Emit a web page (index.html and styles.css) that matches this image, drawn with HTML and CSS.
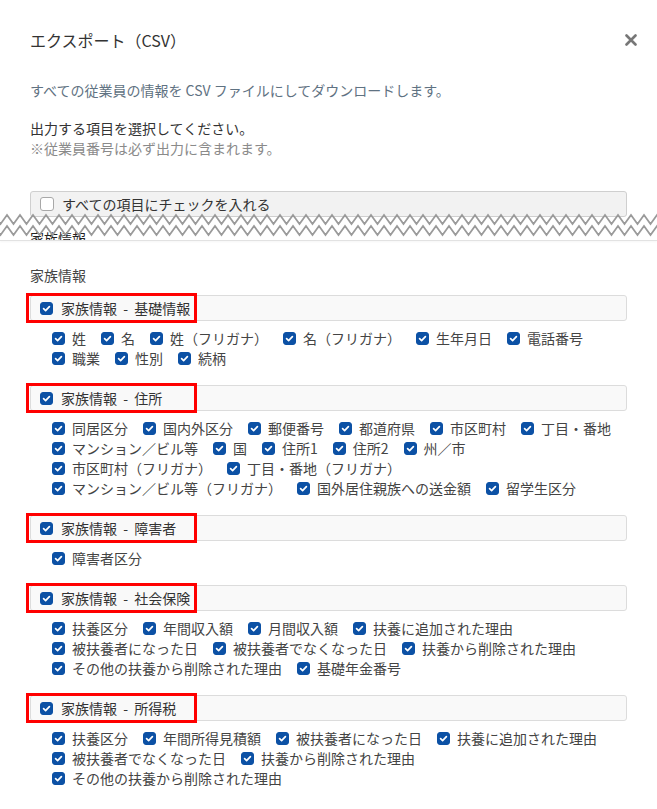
FILE: index.html
```html
<!DOCTYPE html>
<html lang="ja">
<head>
  <meta charset="UTF-8">
  <meta name="viewport" content="width=device-width, initial-scale=1.0">
  <title>エクスポート（CSV）</title>
  <link rel="stylesheet" href="styles.css">
</head>
<body>
  <div class="modal">
    <div class="modal-header">
      <h2>エクスポート（CSV）</h2>
      <button class="close" aria-label="閉じる">
        <svg width="12" height="12" viewBox="0 0 12 12"><path d="M1.5 1.5L10.5 10.5M10.5 1.5L1.5 10.5" stroke="#777" stroke-width="2.6" stroke-linecap="round"/></svg>
      </button>
    </div>

    <div class="modal-body">
      <p class="lead">すべての従業員の情報を CSV ファイルにしてダウンロードします。</p>
      <p class="note">出力する項目を選択してください。</p>
      <p class="sub">※従業員番号は必ず出力に含まれます。</p>
      <label class="select-all"><input type="checkbox"><span>すべての項目にチェックを入れる</span></label>
    </div>

    <!-- screenshot cut -->
    <div class="tear">
      <div class="tear-peek"><span>家族情報</span></div>
      <svg class="zigzag" width="657" height="26" viewBox="0 0 657 26">
        <polyline id="zz" fill="none" stroke="#9a9a9a" stroke-width="1.8" points=""/>
        <polyline id="zz2" fill="none" stroke="#9a9a9a" stroke-width="1.8" points=""/>
      </svg>
    </div>

    <div class="modal-body">
      <div class="section-title">家族情報</div>

      <div class="group">
        <label class="group-head"><input type="checkbox" checked><span>家族情報 - 基礎情報</span><i class="mark"></i></label>
        <div class="items">
          <div class="row">
            <label class="item"><input type="checkbox" checked>姓</label>
            <label class="item"><input type="checkbox" checked>名</label>
            <label class="item"><input type="checkbox" checked>姓（フリガナ）</label>
            <label class="item"><input type="checkbox" checked>名（フリガナ）</label>
            <label class="item"><input type="checkbox" checked>生年月日</label>
            <label class="item"><input type="checkbox" checked>電話番号</label>
          </div>
          <div class="row">
            <label class="item"><input type="checkbox" checked>職業</label>
            <label class="item"><input type="checkbox" checked>性別</label>
            <label class="item"><input type="checkbox" checked>続柄</label>
          </div>
        </div>
      </div>

      <div class="group">
        <label class="group-head"><input type="checkbox" checked><span>家族情報 - 住所</span><i class="mark"></i></label>
        <div class="items">
          <div class="row">
            <label class="item"><input type="checkbox" checked>同居区分</label>
            <label class="item"><input type="checkbox" checked>国内外区分</label>
            <label class="item"><input type="checkbox" checked>郵便番号</label>
            <label class="item"><input type="checkbox" checked>都道府県</label>
            <label class="item"><input type="checkbox" checked>市区町村</label>
            <label class="item"><input type="checkbox" checked>丁目・番地</label>
          </div>
          <div class="row">
            <label class="item"><input type="checkbox" checked>マンション／ビル等</label>
            <label class="item"><input type="checkbox" checked>国</label>
            <label class="item"><input type="checkbox" checked>住所1</label>
            <label class="item"><input type="checkbox" checked>住所2</label>
            <label class="item"><input type="checkbox" checked>州／市</label>
          </div>
          <div class="row">
            <label class="item"><input type="checkbox" checked>市区町村（フリガナ）</label>
            <label class="item"><input type="checkbox" checked>丁目・番地（フリガナ）</label>
          </div>
          <div class="row">
            <label class="item"><input type="checkbox" checked>マンション／ビル等（フリガナ）</label>
            <label class="item"><input type="checkbox" checked>国外居住親族への送金額</label>
            <label class="item"><input type="checkbox" checked>留学生区分</label>
          </div>
        </div>
      </div>

      <div class="group">
        <label class="group-head"><input type="checkbox" checked><span>家族情報 - 障害者</span><i class="mark"></i></label>
        <div class="items">
          <div class="row">
            <label class="item"><input type="checkbox" checked>障害者区分</label>
          </div>
        </div>
      </div>

      <div class="group">
        <label class="group-head"><input type="checkbox" checked><span>家族情報 - 社会保険</span><i class="mark"></i></label>
        <div class="items">
          <div class="row">
            <label class="item"><input type="checkbox" checked>扶養区分</label>
            <label class="item"><input type="checkbox" checked>年間収入額</label>
            <label class="item"><input type="checkbox" checked>月間収入額</label>
            <label class="item"><input type="checkbox" checked>扶養に追加された理由</label>
          </div>
          <div class="row">
            <label class="item"><input type="checkbox" checked>被扶養者になった日</label>
            <label class="item"><input type="checkbox" checked>被扶養者でなくなった日</label>
            <label class="item"><input type="checkbox" checked>扶養から削除された理由</label>
          </div>
          <div class="row">
            <label class="item"><input type="checkbox" checked>その他の扶養から削除された理由</label>
            <label class="item"><input type="checkbox" checked>基礎年金番号</label>
          </div>
        </div>
      </div>

      <div class="group">
        <label class="group-head"><input type="checkbox" checked><span>家族情報 - 所得税</span><i class="mark"></i></label>
        <div class="items">
          <div class="row">
            <label class="item"><input type="checkbox" checked>扶養区分</label>
            <label class="item"><input type="checkbox" checked>年間所得見積額</label>
            <label class="item"><input type="checkbox" checked>被扶養者になった日</label>
            <label class="item"><input type="checkbox" checked>扶養に追加された理由</label>
          </div>
          <div class="row">
            <label class="item"><input type="checkbox" checked>被扶養者でなくなった日</label>
            <label class="item"><input type="checkbox" checked>扶養から削除された理由</label>
          </div>
          <div class="row">
            <label class="item"><input type="checkbox" checked>その他の扶養から削除された理由</label>
          </div>
        </div>
      </div>
    </div>
  </div>

  <script>
    // build the double zigzag of the cut
    function zigzag(top, depth) {
      const pts = [];
      for (let x = -6, i = 0; x <= 670; x += 6.5, i++) {
        pts.push(x + ',' + (i % 2 ? top + depth : top));
      }
      return pts.join(' ');
    }
    document.getElementById('zz').setAttribute('points', zigzag(2, 9));
    document.getElementById('zz2').setAttribute('points', zigzag(13, 9));
  </script>
</body>
</html>
```

FILE: styles.css
```css
* {
  box-sizing: border-box;
}
body {
  margin: 0;
  background: #ffffff;
  font-family: "Noto Sans CJK JP", "Noto Sans", sans-serif;
  font-size: 14px;
  line-height: 20px;
  color: #333333;
}
.modal {
  width: 657px;
}
.modal-header {
  display: flex;
  justify-content: space-between;
  align-items: center;
  padding: 28px 19px 0 30px;
}
.modal-header h2 {
  margin: 0;
  font-size: 16px;
  font-weight: normal;
  line-height: 24px;
  color: #333333;
}
.close {
  border: none;
  background: none;
  padding: 0;
  width: 14px;
  height: 14px;
  display: flex;
  align-items: center;
  justify-content: center;
  cursor: pointer;
}
.modal-body {
  padding: 0 30px;
}
.lead {
  margin: 28px 0 18px;
  color: #5f7282;
}
.note {
  margin: 0;
}
.sub {
  margin: 0;
  color: #8a8a8a;
}

input[type="checkbox"] {
  appearance: none;
  -webkit-appearance: none;
  margin: 0;
  width: 13px;
  height: 13px;
  flex: none;
  border: 1px solid #9a9a9a;
  border-radius: 3px;
  background: #ffffff;
}
input[type="checkbox"]:checked {
  border-color: #0c51a5;
  background: #0c51a5 url("data:image/svg+xml,%3Csvg xmlns='http://www.w3.org/2000/svg' width='13' height='13' viewBox='0 0 13 13'%3E%3Cpath d='M3.6 6.7L5.6 8.6L9.4 4.6' fill='none' stroke='white' stroke-width='1.7' stroke-linecap='round' stroke-linejoin='round'/%3E%3C/svg%3E") center / 13px 13px no-repeat;
}

.select-all {
  display: flex;
  align-items: center;
  gap: 8px;
  height: 26px;
  margin-top: 33px;
  padding: 0 9px;
  background: #f2f2f2;
  border: 1px solid #cfcfcf;
  border-radius: 3px;
}
.select-all input {
  width: 14px;
  height: 14px;
  border-color: #a8a8a8;
}

.tear {
  position: relative;
  height: 24px;
  border-bottom: 1px solid #e2e2e2;
  box-shadow: 0 1px 2px rgba(0, 0, 0, 0.04);
}
.tear-peek {
  height: 23px;
  overflow: hidden;
  padding: 11px 0 0 30px;
  color: #222222;
}
.zigzag {
  position: absolute;
  left: 0;
  top: -4px;
}

.section-title {
  margin-top: 24px;
  color: #444444;
}
.group {
  margin-top: 10px;
}
.group + .group {
  margin-top: 17px;
}
.group-head {
  position: relative;
  display: flex;
  align-items: center;
  gap: 8px;
  height: 26px;
  padding: 0 9px;
  background: #f9f9f9;
  border: 1px solid #dcdcdc;
  border-radius: 3px;
  color: #333333;
  word-spacing: 3px;
}
.mark {
  position: absolute;
  left: -5px;
  top: -3px;
  width: 171px;
  height: 30px;
  border: 3px solid #ff0000;
}
.items {
  padding: 7px 0 0 22px;
}
.row {
  display: flex;
  gap: 15px;
  height: 20px;
}
.item {
  display: flex;
  align-items: center;
  gap: 7px;
  color: #444444;
  white-space: nowrap;
}
```
